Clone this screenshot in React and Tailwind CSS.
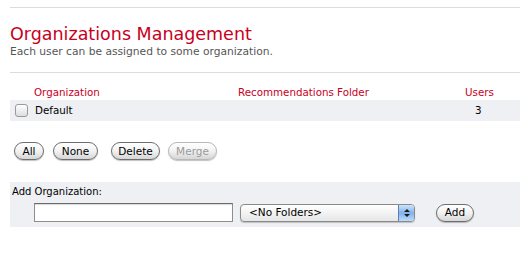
import { useState } from 'react'

const font = { fontFamily: '"DejaVu Sans", Verdana, sans-serif' }

const PillButton = ({ children, disabled, className = '' }) => (
  <button
    type="button"
    disabled={disabled}
    className={`flex h-[18px] items-center justify-center rounded-full border bg-gradient-to-b from-white via-[#f2f2f2] to-[#d6d6d6] text-[10.5px] leading-none shadow-[0_1px_1px_rgba(0,0,0,0.25)] ${
      disabled ? 'border-[#b8b8b8] text-[#9a9a9a]' : 'border-[#6e6e6e] text-black'
    } ${className}`}
  >
    {children}
  </button>
)

export default function App() {
  const [name, setName] = useState('')
  const [checked, setChecked] = useState(false)

  return (
    <div className="h-[262px] w-[520px] overflow-hidden bg-white pl-[10px] pt-[7px]" style={font}>
      <div className="border-t border-[#dcdcdc]" />

      <h1 className="mt-[15px] text-[17.5px] leading-[22px] text-[#c8001e]">Organizations Management</h1>
      <p className="text-[10.7px] leading-[14px] text-[#555]">Each user can be assigned to some organization.</p>

      <div className="mt-[13px] border-t border-[#dcdcdc]" />

      <div className="mt-[12px] grid grid-cols-[204px_1fr_55px] pl-[24px] text-[10.3px] leading-[14px] text-[#c8001e]">
        <span>Organization</span>
        <span>Recommendations Folder</span>
        <span>Users</span>
      </div>

      <div className="mt-[1px] flex h-[21px] items-center bg-[#eef0f4] text-[10.3px] text-black">
        <label className="flex w-[252px] items-center gap-[7px] pl-[5px]">
          <input
            type="checkbox"
            checked={checked}
            onChange={(e) => setChecked(e.target.checked)}
            className="h-[13px] w-[13px] appearance-none rounded-[3px] border border-[#9a9a9a] bg-gradient-to-b from-white to-[#dedede]"
          />
          Default
        </label>
        <span className="flex-1" />
        <span className="w-[45px]">3</span>
      </div>

      <div className="mt-[21px] flex items-center pl-[4px]">
        <PillButton className="w-[30px]">All</PillButton>
        <PillButton className="ml-[9px] w-[45px]">None</PillButton>
        <PillButton className="ml-[13px] w-[49px]">Delete</PillButton>
        <PillButton disabled className="ml-[8px] w-[49px]">Merge</PillButton>
      </div>

      <div className="mt-[22px] h-[45px] bg-[#eef0f4] pl-[2px] pt-[3px]">
        <div className="text-[10px] leading-[14px] text-black">Add Organization:</div>
        <div className="mt-[4px] flex items-center pl-[22px]">
          <input
            value={name}
            onChange={(e) => setName(e.target.value)}
            className="h-[19px] w-[199px] border border-[#8e8e8e] border-t-[#6a6a6a] bg-white px-1 text-[11px] shadow-[inset_0_1px_1px_rgba(0,0,0,0.15)] outline-none"
          />
          <div className="ml-[7px] flex h-[18px] w-[175px] items-center overflow-hidden rounded-[4px] border border-[#8a8a8a] bg-gradient-to-b from-white to-[#e6e6e6] shadow-[0_1px_1px_rgba(0,0,0,0.2)]">
            <span className="flex-1 pl-[8px] text-[10.5px] leading-none text-black">&lt;No Folders&gt;</span>
            <span className="flex h-full w-[16px] items-center justify-center border-l border-[#5b7fb4] bg-gradient-to-b from-[#cfe3fb] via-[#7fb2ee] to-[#bcdcfb]">
              <svg width="6" height="10" viewBox="0 0 6 10">
                <path d="M0 4 L3 1 L6 4 Z M0 6 L3 9 L6 6 Z" fill="#1a1a1a" />
              </svg>
            </span>
          </div>
          <PillButton className="ml-[21px] w-[38px]">Add</PillButton>
        </div>
      </div>
    </div>
  )
}
